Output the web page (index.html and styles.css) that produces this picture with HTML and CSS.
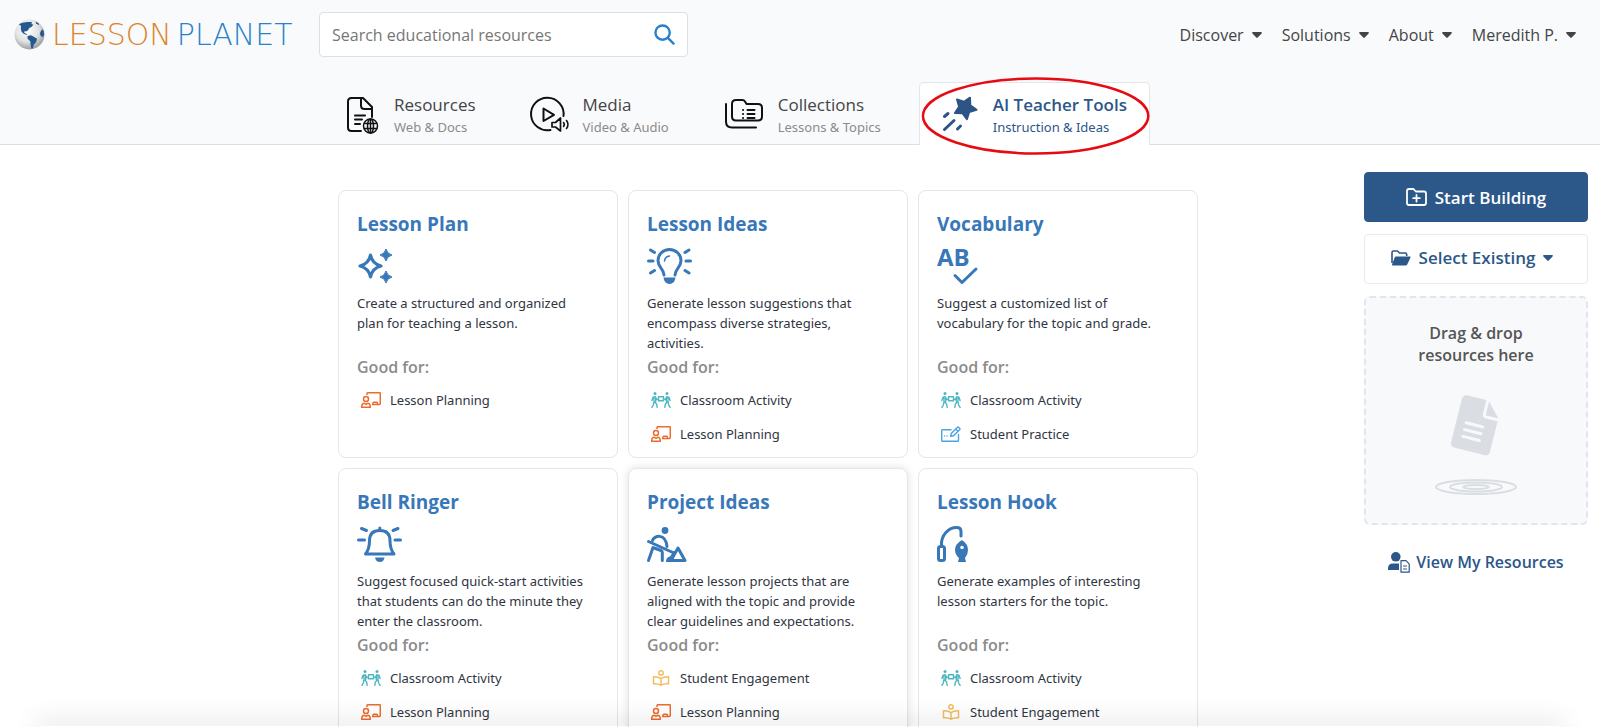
FILE: index.html
```html
<!DOCTYPE html>
<html lang="en">

<head>
    <meta charset="UTF-8">
    <meta name="viewport" content="width=device-width, initial-scale=1.0">
    <title>AI Teacher Tools | Lesson Planet</title>
    <link rel="stylesheet" href="styles.css">
</head>

<body>
    <!-- Shared icons -->
    <svg class="sprite" aria-hidden="true">
        <symbol id="caret" viewBox="0 0 10 6">
            <path d="M1 0h8a.8.8 0 0 1 .6 1.4L5.7 5.6a1 1 0 0 1-1.4 0L.4 1.4A.8.8 0 0 1 1 0z" fill="currentColor" />
        </symbol>
        <symbol id="planning" viewBox="0 0 20 16">
            <g fill="none" stroke="#ec6b2d" stroke-width="1.5" stroke-linejoin="round">
                <path d="M6 3V1.6q0-.9.9-.9h11.500q.9 0 .9.9v9.900q0 .9-.9.9H11" />
                <circle cx="5" cy="7" r="2.500" />
                <path d="M.7 15.300c0-2.600 1.300-4 2.600-4l1.700 1 1.700-1c1.300 0 2.600 1.400 2.600 4z" />
                <path d="M12 12.300v-1q0-1 1-1h2.500q1 0 1 1v1" />
            </g>
        </symbol>
        <symbol id="activity" viewBox="0 0 20 16">
            <g fill="none" stroke="#4fb7c0" stroke-width="1.400" stroke-linecap="round" stroke-linejoin="round">
                <path d="M7.500 4.700h5v4h-5z" />
                <path d="M.9 8.500l1.200-3.400 2.200-.3 1.500 2.700 1.700-.4M3 5.500v4l2.600 2.400.6 3.400M4.700 5.800v4M2.700 10.500L2.400 13l-1.500 2.400" />
                <path d="M19.100 8.500l-1.200-3.400-2.200-.3-1.500 2.700-1.700-.4M17 5.500v4l-2.600 2.400-.6 3.400M15.300 5.800v4M17.300 10.500l.3 2.500 1.500 2.400" />
            </g>
            <circle cx="4" cy="1.600" r="1.500" fill="#4fb7c0" />
            <circle cx="16" cy="1.600" r="1.500" fill="#4fb7c0" />
        </symbol>
        <symbol id="practice" viewBox="0 0 20 16">
            <g fill="none" stroke="#4ba3e3" stroke-width="1.400" stroke-linejoin="round" stroke-linecap="round">
                <path d="M10 3.700H1.600q-.9 0-.9.900v9.800q0 .9.900.9h15q.9 0 .9-.9V8.500" />
                <path d="M9.700 10.300l.5-2.800 6-6q.8-.8 1.700 0l.7.7q.8.8 0 1.600l-6 6zM14.700 3l2.300 2.300" />
                <path d="M3.500 9.900h.1M6 9.900h.1" />
            </g>
        </symbol>
        <symbol id="engagement" viewBox="0 0 20 16">
            <g fill="none" stroke="#f2bd5e" stroke-width="1.500" stroke-linejoin="round">
                <circle cx="10" cy="2.900" r="2.200" />
                <path d="M10 8.600C8 7.200 5.500 6.500 2.500 6.700v7c3-.2 5.500.2 7.500 1.500 2-1.300 4.500-1.700 7.500-1.500v-7c-3-.2-5.500.5-7.500 1.900zM10 8.600v6.600" />
            </g>
        </symbol>
    </svg>

    <header class="site-header">
        <div class="top-bar">
            <a class="logo" href="#" aria-label="Lesson Planet">
                <svg class="logo-globe" viewBox="0 0 32 32" aria-hidden="true">
                    <defs>
                        <radialGradient id="globe-shade" cx=".42" cy=".35" r=".65">
                            <stop offset="0" stop-color="#ffffff" />
                            <stop offset=".6" stop-color="#e2e2e3" />
                            <stop offset="1" stop-color="#9d9ea0" />
                        </radialGradient>
                    </defs>
                    <circle cx="16" cy="16" r="15.500" fill="url(#globe-shade)" />
                    <path d="M5 5.500l3.500-1.700 5-.8 5 .2-.5 2 2 .8-2 2.200-2.200 1-1.300 2.400-2 1.300-1.500-.4-.5 1.700 1.500.8 1.500 1-.5.600-3-1.300-2.200-2.200L7 10l.3-2.800z" fill="#24598f" />
                    <path d="M14 17.500l3.500-.8 2.500 1.300 3.800 2.500-1 3.500-2.300 2.200-1 4-1.500.5-.8-4.100-.4-3.700-2.800-2.600z" fill="#24598f" />
                    <path d="M29.500 10.500l1.200 2.200.3 3.600-1 2.200-2.300-.8-.9-2.700 1-2.500z" fill="#24598f" />
                    <path d="M22.500 2.500l3 2.100.8 1.700-3.500-1.500z" fill="#24598f" />
                </svg>
                <span class="logo-lesson">LESSON</span>
                <span class="logo-planet">PLANET</span>
            </a>
            <form class="search">
                <input type="text" placeholder="Search educational resources" aria-label="Search educational resources">
                <button type="button" aria-label="Search">
                    <svg viewBox="0 0 22 22" aria-hidden="true">
                        <circle cx="9" cy="9" r="7.500" />
                        <path d="M14.500 14.500l6 6" />
                    </svg>
                </button>
            </form>
            <nav class="user-nav" aria-label="Account">
                <a href="#">Discover <svg class="caret"><use href="#caret" /></svg></a>
                <a href="#">Solutions <svg class="caret"><use href="#caret" /></svg></a>
                <a href="#">About <svg class="caret"><use href="#caret" /></svg></a>
                <a href="#">Meredith P. <svg class="caret"><use href="#caret" /></svg></a>
            </nav>
        </div>

        <nav class="tabs" aria-label="Sections">
            <a class="tab" href="#">
                <svg class="tab-icon" width="32" height="38" viewBox="0 0 32 38" aria-hidden="true">
                    <g fill="none" stroke="#111" stroke-width="2" stroke-linejoin="round" stroke-linecap="round">
                        <path d="M14 34H4.500Q1 34 1 30.500v-26Q1 1 4.500 1H16l9 9v10M14 1v7.500q0 3.500 3.500 3.500H25" />
                        <path d="M8 18.500h10M8 22.500h7M8 27h5" />
                        <g stroke-width="1.500">
                            <circle cx="23.500" cy="29" r="7" />
                            <ellipse cx="23.500" cy="29" rx="3" ry="7" />
                            <path d="M17.500 26.500h12M17.500 31.500h12M23.500 22v14" />
                        </g>
                    </g>
                </svg>
                <span class="tab-text"><span class="tab-title">Resources</span><span class="tab-sub">Web &amp; Docs</span></span>
            </a>
            <a class="tab" href="#">
                <svg class="tab-icon" width="36" height="38" viewBox="2 0 36 38" aria-hidden="true">
                    <g fill="none" stroke="#111" stroke-width="2" stroke-linejoin="round" stroke-linecap="round">
                        <path d="M20.500 33A16.300 16.300 0 1 1 33.500 19" />
                        <path d="M13.500 11.500v12.500l10.500-6.200z" />
                        <path d="M22 25.500h3.500l5-4.500v13l-5-4h-3.500z" stroke-width="1.700" />
                        <path d="M33.500 25.500q1.700 2 0 4M36.500 23.500q3 4 0 8" stroke-width="1.600" />
                    </g>
                </svg>
                <span class="tab-text"><span class="tab-title">Media</span><span class="tab-sub">Video &amp; Audio</span></span>
            </a>
            <a class="tab" href="#">
                <svg class="tab-icon" width="38" height="38" viewBox="0 0 38 38" aria-hidden="true">
                    <g fill="none" stroke="#111" stroke-width="2" stroke-linejoin="round" stroke-linecap="round">
                        <path d="M1 7v17.500q0 6 6 6h24" />
                        <path d="M7 7q0-4 4-4h6.500q1.500 0 2.500 1.500L21.500 7H33q4 0 4 4v8.500q0 4-4 4H11q-4 0-4-4z" />
                        <path d="M22.500 13h7M22.500 17h7M22.500 21h7M18 13h.1M18 17h.1M18 21h.1" />
                    </g>
                </svg>
                <span class="tab-text"><span class="tab-title">Collections</span><span class="tab-sub">Lessons &amp; Topics</span></span>
            </a>
            <a class="tab active" href="#" aria-current="page">
                <svg class="tab-icon" width="36" height="38" viewBox="0 0 36 38" aria-hidden="true">
                    <path d="M15 2.500l7 2.300 6-4.100.3 7.600 6.200 4.500-7.300 2.200-2.300 7.200-4.500-6-7.500-.2 4.200-6.200z" fill="#2c5486" stroke="#2c5486" stroke-width="2" stroke-linejoin="round" />
                    <path d="M2.500 19.500l3.500-3M2.500 32.500L12 23.500M15.500 32l3-3" fill="none" stroke="#2c5486" stroke-width="3" stroke-linecap="round" />
                </svg>
                <span class="tab-text"><span class="tab-title">AI Teacher Tools</span><span class="tab-sub">Instruction &amp; Ideas</span></span>
                <svg class="highlight" viewBox="0 0 232 78" preserveAspectRatio="none" aria-hidden="true">
                    <ellipse cx="116" cy="39" rx="114" ry="37.500" />
                </svg>
            </a>
        </nav>
    </header>

    <main class="content">
        <section class="cards" aria-label="AI teacher tools">
            <article class="card">
                <h2><a href="#">Lesson Plan</a></h2>
                <svg class="card-icon" width="36" height="36" viewBox="0 0 36 36" aria-hidden="true">
                    <path d="M13.500 7q1.700 8.800 10.500 11-8.800 2.200-10.500 11Q11.800 20.200 3 18q8.800-2.200 10.500-11z" fill="none" stroke="#3877b8" stroke-width="3.200" stroke-linejoin="round" />
                    <path d="M29 1q1 4.800 6 6-5 1.200-6 6-1-4.800-6-6 5-1.200 6-6zM29 23q1 4.800 6 6-5 1.200-6 6-1-4.800-6-6 5-1.200 6-6z" fill="#3877b8" stroke="#3877b8" stroke-linejoin="round" />
                </svg>
                <p class="description">Create a structured and organized plan for teaching a lesson.</p>
                <h3>Good for:</h3>
                <ul>
                    <li><svg><use href="#planning" /></svg>Lesson Planning</li>
                </ul>
            </article>
            <article class="card">
                <h2><a href="#">Lesson Ideas</a></h2>
                <svg class="card-icon" width="46" height="36" viewBox="0 0 46 36" aria-hidden="true">
                    <g fill="none" stroke="#3877b8" stroke-width="3" stroke-linecap="round">
                        <path d="M17.500 27c0-6-6-7.500-6-14.500a11.500 11 0 0 1 23 0c0 7-6 8.500-6 14.500" transform="translate(-.5 0)" />
                        <path d="M17.500 13q.5-4.500 5-5" stroke-width="1.600" />
                        <path d="M1.500 13h4.500M39 13h4.500M3.500 2l4 2.500M42 2l-4 2.500M3.500 25l4-2.500M42 25l-4-2.500" />
                    </g>
                    <path d="M16.500 29.500h12q-.7 6.500-6 6.500t-6-6.500z" fill="#3877b8" />
                </svg>
                <p class="description">Generate lesson suggestions that encompass diverse strategies, activities.</p>
                <h3>Good for:</h3>
                <ul>
                    <li><svg><use href="#activity" /></svg>Classroom Activity</li>
                    <li><svg><use href="#planning" /></svg>Lesson Planning</li>
                </ul>
            </article>
            <article class="card">
                <h2><a href="#">Vocabulary</a></h2>
                <svg class="card-icon" width="42" height="36" viewBox="0 0 42 36" aria-hidden="true">
                    <text class="icon-letters" x="0" y="18">AB</text>
                    <path d="M18 27.500l7 7 14-13.500" fill="none" stroke="#3877b8" stroke-width="3" stroke-linecap="round" stroke-linejoin="round" />
                </svg>
                <p class="description">Suggest a customized list of vocabulary for the topic and grade.</p>
                <h3>Good for:</h3>
                <ul>
                    <li><svg><use href="#activity" /></svg>Classroom Activity</li>
                    <li><svg><use href="#practice" /></svg>Student Practice</li>
                </ul>
            </article>
            <article class="card">
                <h2><a href="#">Bell Ringer</a></h2>
                <svg class="card-icon" width="46" height="36" viewBox="0 0 46 36" aria-hidden="true">
                    <g fill="none" stroke="#3877b8" stroke-width="3" stroke-linecap="round" stroke-linejoin="round">
                        <path d="M8.500 28h28.500q-4-5-4-13.500Q33 4.500 22.800 4.500T12.500 14.500Q12.500 23 8.500 28z" />
                        <path d="M22.800 2v1M1.500 14h6M38 14h5.500M4.500 2.500l5 2M41 2.500l-5 2" />
                    </g>
                    <path d="M18 31.500h9.500q-.8 4.500-4.700 4.500T18 31.500z" fill="#3877b8" />
                </svg>
                <p class="description">Suggest focused quick-start activities that students can do the minute they enter the classroom.</p>
                <h3>Good for:</h3>
                <ul>
                    <li><svg><use href="#activity" /></svg>Classroom Activity</li>
                    <li><svg><use href="#planning" /></svg>Lesson Planning</li>
                </ul>
            </article>
            <article class="card hovered">
                <h2><a href="#">Project Ideas</a></h2>
                <svg class="card-icon" width="42" height="36" viewBox="0 0 42 36" aria-hidden="true">
                    <circle cx="18" cy="4.500" r="3.400" fill="#3877b8" />
                    <g fill="none" stroke="#3877b8" stroke-width="3" stroke-linecap="round" stroke-linejoin="round">
                        <path d="M1.500 15.500L27 27" />
                        <path d="M5.500 14.500C7 9.500 18.500 6.500 20 20.500" />
                        <path d="M6 21.500L1.500 34.500M7 22l7 2.500q1.300.5 1.300 2v8" />
                        <path d="M24 34.500l7-12.500 7 12.500z" />
                    </g>
                    <path d="M19 36q0-5 4-5.500l4-6 2 3-5 8.500z" fill="#3877b8" />
                </svg>
                <p class="description">Generate lesson projects that are aligned with the topic and provide clear guidelines and expectations.</p>
                <h3>Good for:</h3>
                <ul>
                    <li><svg><use href="#engagement" /></svg>Student Engagement</li>
                    <li><svg><use href="#planning" /></svg>Lesson Planning</li>
                </ul>
            </article>
            <article class="card">
                <h2><a href="#">Lesson Hook</a></h2>
                <svg class="card-icon" width="32" height="36" viewBox="0 0 32 36" aria-hidden="true">
                    <g fill="none" stroke="#3877b8" stroke-width="3" stroke-linecap="round" stroke-linejoin="round">
                        <rect x="1.500" y="20.500" width="6" height="14" rx="2" />
                        <path d="M4.500 20C3.500 9 12 1 20.500 1.500q3.500.3 3.500 4V10" />
                    </g>
                    <path fill-rule="evenodd" d="M25 14q6 4 6 10 0 4.500-3 8l1 4h-8l1-4q-4-3.500-4-8 0-6 7-10zm0 5.700a1.800 1.800 0 1 0 0 3.600 1.800 1.800 0 0 0 0-3.600z" fill="#3877b8" />
                </svg>
                <p class="description">Generate examples of interesting lesson starters for the topic.</p>
                <h3>Good for:</h3>
                <ul>
                    <li><svg><use href="#activity" /></svg>Classroom Activity</li>
                    <li><svg><use href="#engagement" /></svg>Student Engagement</li>
                </ul>
            </article>
        </section>

        <aside class="builder">
            <button type="button" class="btn btn-primary">
                <svg width="21" height="18" viewBox="0 0 21 18" fill="none" stroke="currentColor" stroke-width="1.800" stroke-linejoin="round" stroke-linecap="round" aria-hidden="true">
                    <path d="M1 3q0-2 2-2h4.500l2.300 2.500H18q2 0 2 2V15q0 2-2 2H3q-2 0-2-2zM10.500 7v6.500M7.200 10.200h6.600" />
                </svg>
                Start Building
            </button>
            <button type="button" class="btn btn-select">
                <svg width="20" height="16" viewBox="0 0 20 16" aria-hidden="true">
                    <path d="M1 13V2.500Q1 1 2.500 1h4l2 2h5.700q1.500 0 1.500 1.500V6" fill="none" stroke="currentColor" stroke-width="1.600" />
                    <path d="M5 6.500h13.500q1.500 0 .9 1.300l-3.200 6.600q-.5 1-1.700 1H2q-1.500 0-.9-1.200l2.500-6.500q.5-1.200 1.400-1.200z" fill="currentColor" />
                </svg>
                Select Existing
                <svg class="caret"><use href="#caret" /></svg>
            </button>
            <div class="drop-zone">
                <p>Drag &amp; drop<br>resources here</p>
                <svg width="84" height="100" viewBox="0 0 84 100" aria-hidden="true">
                    <g transform="rotate(14 41 29)">
                        <path d="M27 2h19v14q0 4 4 4h12v31q0 5-5 5H27q-5 0-5-5V7q0-5 5-5z" fill="#dadee3" />
                        <path d="M49 2.500L62 17H49z" fill="#dadee3" />
                        <path d="M32 29h17M32 36h17M32 43h17" stroke="#f8f9fb" stroke-width="3" stroke-linecap="round" />
                    </g>
                    <g fill="none" stroke="#dadee3" stroke-width="2">
                        <ellipse cx="42" cy="91" rx="40" ry="7" />
                        <ellipse cx="42" cy="91" rx="26" ry="4.500" />
                        <ellipse cx="42" cy="91" rx="13" ry="2" />
                    </g>
                </svg>
            </div>
            <a class="view-link" href="#">
                <svg width="22" height="21" viewBox="0 0 22 21" aria-hidden="true">
                    <circle cx="7.800" cy="4.800" r="4.800" fill="currentColor" />
                    <path d="M0 18v-1.500Q0 11.500 5 11.500h6V18z" fill="currentColor" />
                    <path d="M13 8.700h5l3.200 3.200v8.300H13zM15 14h4M15 17h4" fill="#fff" stroke="currentColor" stroke-width="1.200" stroke-linejoin="round" />
                </svg>
                View My Resources
            </a>
        </aside>
    </main>
    <div class="page-fade"></div>
</body>

</html>
```
FILE: styles.css
```css
:root {
    --navy: #2c5789;
    --blue: #3877b8;
    --text: #2f3542;
    --muted: #8b8b8b;
    --border: #e3e6ea;
    --header-bg: #f9fafc;
    --heading-font: "Open Sans", "Noto Sans", sans-serif;
}

* {
    box-sizing: border-box;
}

body {
    margin: 0;
    background: #fff;
    color: var(--text);
    font-family: "Noto Sans", "Open Sans", sans-serif;
    font-size: 13px;
    line-height: 20px;
}

a {
    color: inherit;
    text-decoration: none;
}

svg {
    flex: none;
    overflow: visible;
}

.sprite {
    display: none;
}

.caret {
    width: 10px;
    height: 6px;
}

/* Header */
.site-header {
    display: flex;
    flex-direction: column;
    gap: 25px;
    background: var(--header-bg);
    border-bottom: 1px solid #dcdfe2;
}

.top-bar {
    display: flex;
    align-items: center;
    padding: 12px 24px 0 14px;
}

.logo {
    display: flex;
    align-items: center;
    width: 305px;
    font-family: "DejaVu Sans Light", "DejaVu Sans", sans-serif;
    font-size: 30px;
    font-weight: 200;
    line-height: 32px;
}

.logo-globe {
    width: 31px;
    height: 31px;
    margin-right: 7px;
}

.logo-lesson {
    color: #dd8427;
    margin-right: 5px;
}

.logo-planet {
    color: #2b82cb;
}

.search {
    display: flex;
    width: 369px;
    height: 45px;
    background: #fff;
    border: 1px solid #dddfe6;
    border-radius: 4px;
}

.search input {
    flex: 1;
    min-width: 0;
    padding: 0 12px;
    border: 0;
    background: none;
    font-family: var(--heading-font);
    font-size: 16px;
}

.search input::placeholder {
    color: #767676;
    opacity: 1;
}

.search button {
    padding: 0 12px;
    border: 0;
    background: none;
    cursor: pointer;
}

.search svg {
    display: block;
    width: 21px;
    height: 21px;
    fill: none;
    stroke: #2b7fcb;
    stroke-width: 2.5;
    stroke-linecap: round;
}

.user-nav {
    display: flex;
    gap: 20px;
    margin-left: auto;
    color: #444;
    font-family: var(--heading-font);
    font-size: 16px;
}

.user-nav a {
    display: flex;
    align-items: center;
    gap: 8px;
}

.tabs {
    display: flex;
    gap: 10px;
    margin-bottom: -1px;
    padding-left: 324px;
}

.tab {
    display: flex;
    align-items: center;
    gap: 15px;
    height: 63px;
    padding: 3px 22px 0;
    border: 1px solid transparent;
    border-bottom: 0;
}

.tab.active {
    position: relative;
    margin-left: 5px;
    background: #fff;
    border-color: var(--border);
    border-radius: 5px 5px 0 0;
    color: var(--navy);
}

.tab-text {
    display: flex;
    flex-direction: column;
    gap: 2px;
}

.tab-title {
    color: #444;
    font-family: var(--heading-font);
    font-size: 17px;
}

.tab-sub {
    color: var(--muted);
}

.active .tab-title {
    color: var(--navy);
    font-weight: 600;
}

.active .tab-sub {
    color: var(--navy);
}

.highlight {
    position: absolute;
    top: -6px;
    left: 1px;
    width: 100%;
    height: 78px;
    fill: none;
    stroke: #e60b12;
    stroke-width: 2.5;
}

/* Tool cards */
.content {
    display: flex;
    align-items: flex-start;
    justify-content: space-between;
    gap: 24px;
    padding: 27px 12px 40px 338px;
}

.cards {
    display: grid;
    grid-template-columns: repeat(3, 280px);
    gap: 10px;
    padding-top: 18px;
}

.card {
    min-height: 268px;
    padding: 19px 18px 11px;
    background: #fff;
    border: 1px solid var(--border);
    border-radius: 8px;
}

.card.hovered {
    box-shadow: 0 0 8px rgba(60, 70, 85, 0.16);
}

.card h2 {
    margin: 0;
    color: var(--blue);
    font-family: var(--heading-font);
    font-size: 19px;
    line-height: 28px;
}

.card-icon {
    display: block;
    margin: 10px 0 9px;
}

.icon-letters {
    fill: var(--blue);
    font-family: var(--heading-font);
    font-size: 24px;
    font-weight: 700;
}

.description {
    min-height: 60px;
    margin: 0;
    padding-right: 8px;
}

.card h3 {
    margin: 4px 0 11px;
    color: var(--muted);
    font-family: var(--heading-font);
    font-size: 16px;
    font-weight: 600;
    line-height: 20px;
}

.card ul {
    display: flex;
    flex-direction: column;
    gap: 10px;
    margin: 0;
    padding: 0;
    list-style: none;
}

.card li {
    display: flex;
    align-items: center;
    gap: 9px;
    height: 24px;
    padding-left: 4px;
}

.card li svg {
    width: 20px;
    height: 16px;
}

/* Right column */
.builder {
    display: flex;
    flex-direction: column;
    gap: 12px;
    width: 224px;
}

.btn {
    display: flex;
    align-items: center;
    justify-content: center;
    gap: 8px;
    height: 50px;
    background: #fff;
    border: 1px solid #e6eaf2;
    border-radius: 4px;
    color: var(--navy);
    font-family: var(--heading-font);
    font-size: 17px;
    font-weight: 600;
    cursor: pointer;
}

.btn-primary {
    background: var(--navy);
    border-color: var(--navy);
    color: #fff;
}

.btn-select {
    padding: 0 12px 3px 4px;
}

.drop-zone {
    display: flex;
    flex-direction: column;
    align-items: center;
    gap: 30px;
    padding: 24px 0 27px;
    background: #f8f9fb;
    border: 2px dashed #e0e5ee;
    border-radius: 6px;
    color: #555;
    font-family: var(--heading-font);
    font-size: 16px;
    font-weight: 600;
    line-height: 22px;
    text-align: center;
}

.drop-zone p {
    margin: 0;
}

.view-link {
    display: flex;
    align-items: center;
    justify-content: center;
    gap: 6px;
    padding-top: 14px;
    color: var(--navy);
    font-family: var(--heading-font);
    font-size: 16px;
    font-weight: 600;
    line-height: 22px;
}

/* Soft shadow along the bottom edge of the window */
.page-fade {
    position: fixed;
    right: 40px;
    bottom: 0;
    left: 40px;
    height: 1px;
    box-shadow: 0 0 24px 4px rgba(0, 0, 0, 0.16);
    pointer-events: none;
}

@media (max-width: 1500px) {
    .content {
        padding-left: 24px;
    }

    .tabs {
        padding-left: 10px;
    }
}

@media (max-width: 1160px) {
    .cards {
        grid-template-columns: repeat(auto-fill, minmax(240px, 1fr));
        flex: 1;
    }

    .top-bar,
    .tabs {
        flex-wrap: wrap;
        row-gap: 12px;
    }
}
```
